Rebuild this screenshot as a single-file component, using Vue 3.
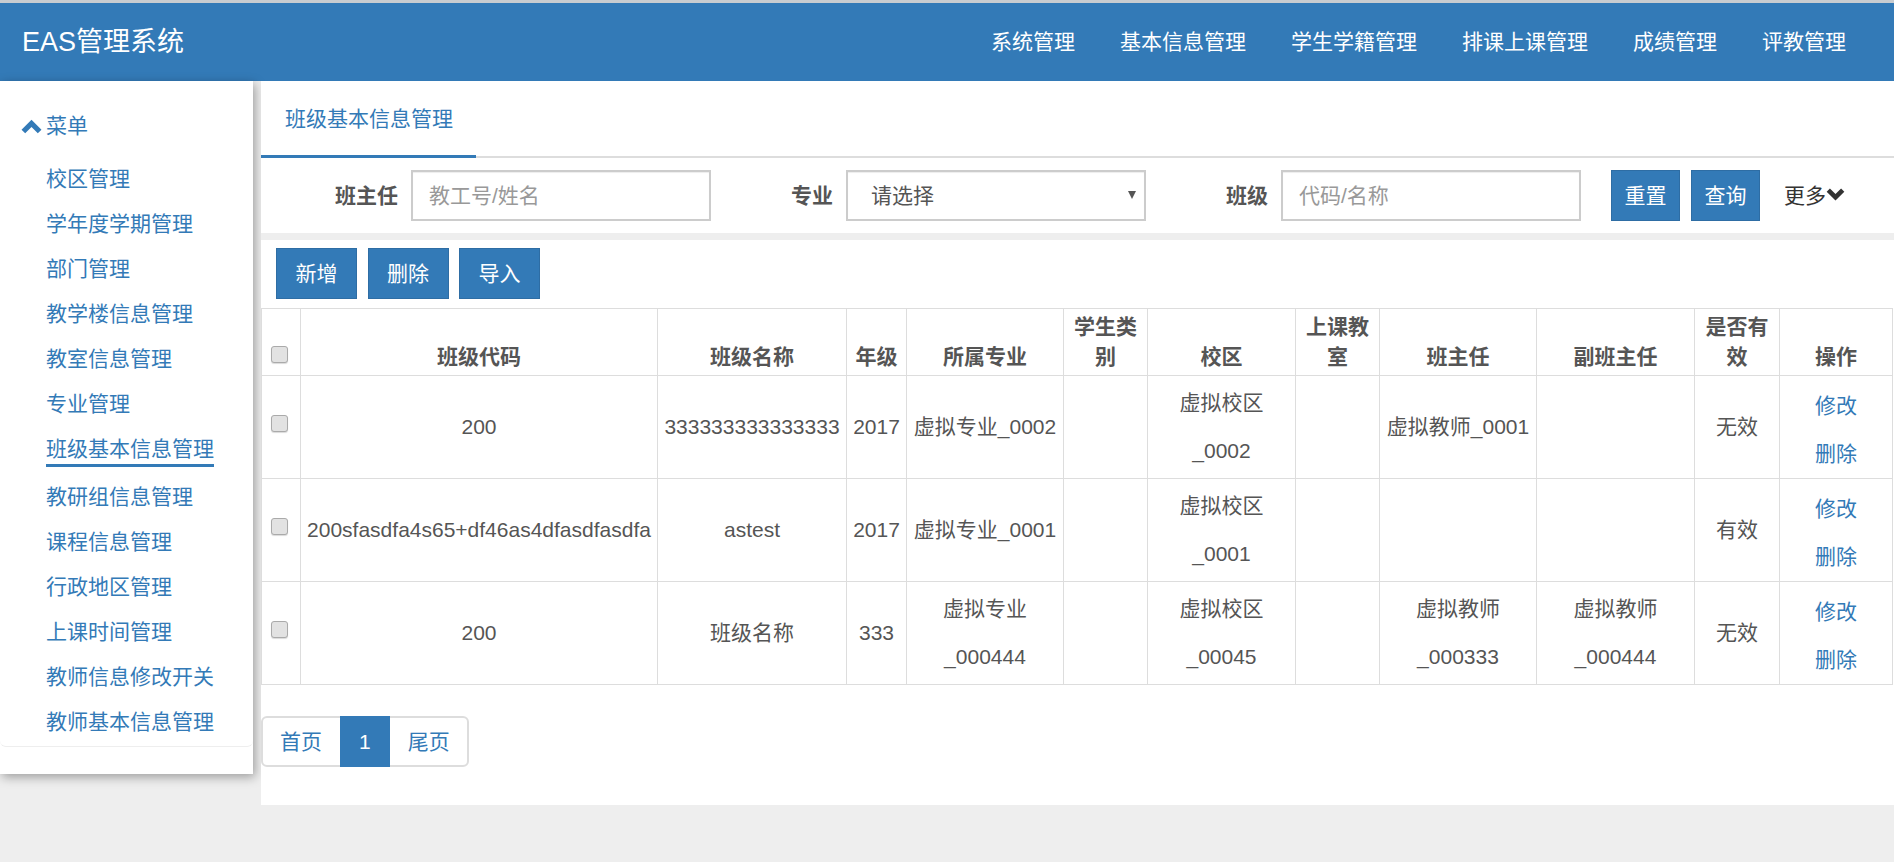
<template>
  <div class="page">
    <header class="topbar">
      <div class="brand">EAS管理系统</div>
      <nav class="top-nav">
        <a v-for="item in topMenus" :key="item" class="top-link">{{ item }}</a>
      </nav>
    </header>

    <div class="body">
      <aside class="sidebar">
        <div class="side-panel">
          <div class="side-title">
            <svg class="chevron" viewBox="0 0 20 14" width="21" height="15">
              <path d="M10 0.5 L19.5 10 L16 13.5 L10 7.5 L4 13.5 L0.5 10 Z" fill="#337ab7" />
            </svg>
            <span>菜单</span>
          </div>
          <ul class="side-list">
            <li v-for="item in sideMenus" :key="item" class="side-item">
              <a class="side-link" :class="{ active: item === activeMenu }">{{ item }}</a>
            </li>
          </ul>
        </div>
      </aside>

      <main class="main">
        <div class="tabs">
          <a class="tab">班级基本信息管理</a>
        </div>

        <div class="filters">
          <label class="f-label f-label-1">班主任</label>
          <input class="f-input" type="text" placeholder="教工号/姓名" />
          <label class="f-label f-label-2">专业</label>
          <div class="select-wrap">
            <select class="f-select">
              <option>请选择</option>
            </select>
          </div>
          <label class="f-label f-label-3">班级</label>
          <input class="f-input" type="text" placeholder="代码/名称" />
          <button class="btn btn-reset">重置</button>
          <button class="btn btn-query">查询</button>
          <span class="more">更多<svg viewBox="0 0 20 14" width="19" height="13">
            <path d="M10 13.5 L19.5 4 L16 0.5 L10 6.5 L4 0.5 L0.5 4 Z" fill="#333" />
          </svg></span>
        </div>

        <div class="actions">
          <button class="btn">新增</button>
          <button class="btn">删除</button>
          <button class="btn">导入</button>
        </div>

        <table class="grid">
          <colgroup>
            <col v-for="(w, i) in colWidths" :key="i" :style="{ width: w + 'px' }" />
          </colgroup>
          <thead>
            <tr>
              <th class="check-col"><input type="checkbox" class="check" /></th>
              <th v-for="h in headers" :key="h">{{ h }}</th>
            </tr>
          </thead>
          <tbody>
            <tr v-for="row in rows" :key="row.name">
              <td class="check-col"><input type="checkbox" class="check" /></td>
              <td>{{ row.code }}</td>
              <td>{{ row.name }}</td>
              <td>{{ row.grade }}</td>
              <td>{{ row.major }}</td>
              <td></td>
              <td>{{ row.campus }}</td>
              <td></td>
              <td>{{ row.teacher }}</td>
              <td>{{ row.deputy }}</td>
              <td>{{ row.valid }}</td>
              <td class="ops"><a>修改</a><a>删除</a></td>
            </tr>
          </tbody>
        </table>

        <div class="pager">
          <a class="page-item first">首页</a>
          <a class="page-item current">1</a>
          <a class="page-item last">尾页</a>
        </div>
      </main>
    </div>
  </div>
</template>

<script setup>
const topMenus = ['系统管理', '基本信息管理', '学生学籍管理', '排课上课管理', '成绩管理', '评教管理']

const sideMenus = [
  '校区管理',
  '学年度学期管理',
  '部门管理',
  '教学楼信息管理',
  '教室信息管理',
  '专业管理',
  '班级基本信息管理',
  '教研组信息管理',
  '课程信息管理',
  '行政地区管理',
  '上课时间管理',
  '教师信息修改开关',
  '教师基本信息管理'
]
const activeMenu = '班级基本信息管理'

const colWidths = [39, 357, 189, 60, 157, 84, 148, 84, 157, 158, 85, 113]
const headers = ['班级代码', '班级名称', '年级', '所属专业', '学生类别', '校区', '上课教室', '班主任', '副班主任', '是否有效', '操作']

const rows = [
  { code: '200', name: '333333333333333', grade: '2017', major: '虚拟专业_0002', campus: '虚拟校区_0002', teacher: '虚拟教师_0001', deputy: '', valid: '无效' },
  { code: '200sfasdfa4s65+df46as4dfasdfasdfa', name: 'astest', grade: '2017', major: '虚拟专业_0001', campus: '虚拟校区_0001', teacher: '', deputy: '', valid: '有效' },
  { code: '200', name: '班级名称', grade: '333', major: '虚拟专业_000444', campus: '虚拟校区_00045', teacher: '虚拟教师_000333', deputy: '虚拟教师_000444', valid: '无效' }
]
</script>

<style>
html,
body {
  margin: 0;
  background: #eee;
}
</style>

<style scoped>
.page {
  width: 1894px;
  height: 862px;
  overflow: hidden;
  background: #eee;
  color: #555;
  font-family: "Liberation Sans", "Noto Sans CJK SC", sans-serif;
  font-size: 21px;
  line-height: 30px;
}

.topbar {
  height: 78px;
  border-top: 3px solid #c8ccd0;
  background: #337ab7;
  color: #fff;
  display: flex;
  align-items: center;
  justify-content: space-between;
  padding: 0 48px 0 22px;
}

.brand {
  font-size: 27px;
}

.top-nav {
  display: flex;
  gap: 45px;
}

.top-link {
  color: #fff;
  font-weight: 400;
}

.body {
  display: flex;
  align-items: flex-start;
  gap: 8px;
}

.sidebar {
  width: 253px;
  height: 693px;
  background: #fff;
  box-shadow: 2px 3px 10px rgba(0, 0, 0, 0.35);
  flex: none;
}

.side-panel {
  height: 666px;
  border-bottom: 1px solid #eee;
  border-radius: 0 0 6px 6px;
  box-sizing: border-box;
}

.side-title {
  display: flex;
  align-items: center;
  gap: 4px;
  padding: 30px 0 0 21px;
  color: #337ab7;
}

.side-list {
  list-style: none;
  margin: 15px 0 0;
  padding: 0 0 0 46px;
}

.side-item {
  padding: 7.5px 0;
}

.side-link {
  display: inline-block;
  color: #337ab7;
  vertical-align: top;
}

.side-link.active {
  border-bottom: 3px solid #337ab7;
}

.main {
  flex: 1;
  height: 724px;
  background: #fff;
}

.tabs {
  height: 77px;
  border-bottom: 2px solid #ddd;
  display: flex;
  box-sizing: border-box;
}

.tab {
  width: 215px;
  height: 77px;
  box-sizing: border-box;
  padding: 23px 0 0 24px;
  border-bottom: 3px solid #337ab7;
  color: #337ab7;
}

.filters {
  height: 82px;
  box-sizing: border-box;
  padding: 12px 0;
  display: flex;
  align-items: flex-start;
  border-bottom: 7px solid #eee;
}

.f-label {
  font-weight: 700;
  line-height: 51px;
}

.f-label-1 {
  margin-left: 74px;
  margin-right: 13px;
}

.f-label-2 {
  margin-left: 80px;
  margin-right: 13px;
}

.f-label-3 {
  margin-left: 80px;
  margin-right: 13px;
}

.f-input {
  width: 300px;
  height: 51px;
  box-sizing: border-box;
  border: 2px solid #ccc;
  box-shadow: inset 0 1px 1px rgba(0, 0, 0, 0.075);
  padding: 0 16px;
  font: inherit;
  color: #555;
  outline: none;
}

.f-input::placeholder {
  color: #999;
}

.select-wrap {
  position: relative;
}

.select-wrap::after {
  content: "";
  position: absolute;
  right: 10px;
  top: 21px;
  border-left: 4px solid transparent;
  border-right: 4px solid transparent;
  border-top: 8px solid #555;
}

.f-select {
  display: block;
  appearance: none;
  width: 300px;
  height: 51px;
  box-sizing: border-box;
  border: 2px solid #ccc;
  border-radius: 0;
  background: #fff;
  box-shadow: inset 0 1px 1px rgba(0, 0, 0, 0.075);
  padding: 0 23px;
  font: inherit;
  color: #555;
  outline: none;
}

.btn {
  height: 51px;
  width: 81px;
  box-sizing: border-box;
  border: 1px solid #2e6da4;
  background: #337ab7;
  color: #fff;
  font: inherit;
  padding: 0;
}

.btn-reset {
  width: 69px;
  margin-left: 30px;
}

.btn-query {
  width: 69px;
  margin-left: 11px;
}

.more {
  margin-left: 24px;
  line-height: 51px;
  color: #333;
}

.more svg {
  vertical-align: 2px;
}

.actions {
  display: flex;
  gap: 10.5px;
  padding: 8px 0 9px 15px;
}

.grid {
  width: 1631px;
  table-layout: fixed;
  border-collapse: collapse;
  border-top: 1px solid #ddd;
}

.grid th,
.grid td {
  border: 1px solid #ddd;
  padding: 3px;
  text-align: center;
  overflow-wrap: anywhere;
}

.grid th {
  vertical-align: bottom;
  line-height: 30px;
  font-weight: 700;
}

.grid td {
  line-height: 48px;
  vertical-align: middle;
}

.grid .check-col {
  padding: 0;
}

.grid td.ops {
  padding: 6px 3px 0;
}

.check {
  appearance: none;
  display: inline-block;
  width: 17px;
  height: 17px;
  margin: 0 3px 10px 0;
  vertical-align: middle;
  box-sizing: border-box;
  border: 1px solid #aaa;
  border-radius: 3px;
  background: #e2e2e2;
  box-shadow: 0 1px 1px rgba(0, 0, 0, 0.15);
}

th .check {
  margin-bottom: 12px;
}

.ops a {
  display: block;
  color: #337ab7;
}

.pager {
  display: flex;
  margin-top: 31px;
  width: fit-content;
  border: 2px solid #ddd;
  border-radius: 6px;
  height: 51px;
  box-sizing: border-box;
}

.page-item {
  line-height: 47px;
  padding: 0 18px;
  color: #337ab7;
}

.page-item.first {
  padding: 0 18px 0 17px;
}

.page-item.last {
  padding: 0 17px 0 18px;
}

.page-item.current {
  margin: -2px 0;
  line-height: 51px;
  padding: 0 19px;
  background: #337ab7;
  color: #fff;
}
</style>
